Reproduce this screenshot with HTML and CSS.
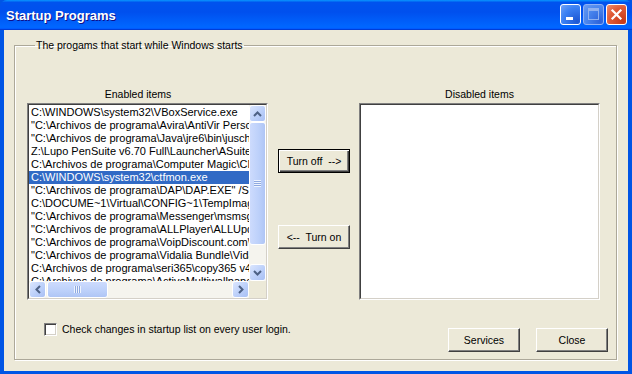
FILE: index.html
```html
<!DOCTYPE html>
<html lang="en">
<head>
    <meta charset="UTF-8">
    <meta name="viewport" content="width=device-width, initial-scale=1.0">
    <title>Startup Programs</title>
    <link rel="stylesheet" href="styles.css">
</head>
<body>
    <div class="window">
        <div class="titlebar">
            <span class="title">Startup Programs</span>
            <div class="title-buttons">
                <button class="tb tb-min"><span class="min-bar"></span></button>
                <button class="tb tb-max" disabled><span class="max-box"></span></button>
                <button class="tb tb-close">
                    <svg width="13" height="13" viewBox="0 0 13 13">
                        <path d="M2.5 2.5 L10.5 10.5 M10.5 2.5 L2.5 10.5" stroke="#fff" stroke-width="2.2" stroke-linecap="square"/>
                    </svg>
                </button>
            </div>
        </div>

        <div class="dialog">
            <fieldset class="group">
                <legend>The progams that start while Windows starts</legend>

                <div class="columns">
                    <div class="column">
                        <div class="caption caption-left">Enabled items</div>
                        <div class="listbox">
                            <div class="listbox-frame">
                                <ul class="items">
                                    <li>C:\WINDOWS\system32\VBoxService.exe</li>
                                    <li>"C:\Archivos de programa\Avira\AntiVir PersonalEdition Classic\avgnt.exe" /min</li>
                                    <li>"C:\Archivos de programa\Java\jre6\bin\jusched.exe"</li>
                                    <li>Z:\Lupo PenSuite v6.70 Full\Launcher\ASuite.exe</li>
                                    <li>C:\Archivos de programa\Computer Magic\CMI\cmi.exe</li>
                                    <li class="selected">C:\WINDOWS\system32\ctfmon.exe</li>
                                    <li>"C:\Archivos de programa\DAP\DAP.EXE" /STARTUP</li>
                                    <li>C:\DOCUME~1\Virtual\CONFIG~1\TempImageUploader.exe</li>
                                    <li>"C:\Archivos de programa\Messenger\msmsgs.exe" /background</li>
                                    <li>"C:\Archivos de programa\ALLPlayer\ALLUpdate.exe"</li>
                                    <li>"C:\Archivos de programa\VoipDiscount.com\VoipDiscount.exe"</li>
                                    <li>"C:\Archivos de programa\Vidalia Bundle\Vidalia\vidalia.exe"</li>
                                    <li>C:\Archivos de programa\seri365\copy365 v4\copy365.exe</li>
                                    <li>C:\Archivos de programa\ActiveMultiwallpaper\amw.exe</li>
                                </ul>

                                <div class="vscroll">
                                    <div class="sb-btn">
                                        <svg width="9" height="6" viewBox="0 0 9 6"><path d="M1 5 L4.5 1.5 L8 5" fill="none" stroke="#4d6185" stroke-width="2"/></svg>
                                    </div>
                                    <div class="thumb thumb-v"><span class="grip-v"></span></div>
                                    <div class="track"></div>
                                    <div class="sb-btn">
                                        <svg width="9" height="6" viewBox="0 0 9 6"><path d="M1 1 L4.5 4.5 L8 1" fill="none" stroke="#4d6185" stroke-width="2"/></svg>
                                    </div>
                                </div>

                                <div class="hscroll">
                                    <div class="sb-btn">
                                        <svg width="6" height="9" viewBox="0 0 6 9"><path d="M5 1 L1.5 4.5 L5 8" fill="none" stroke="#4d6185" stroke-width="2"/></svg>
                                    </div>
                                    <div class="thumb thumb-h"><span class="grip-h"></span></div>
                                    <div class="track"></div>
                                    <div class="sb-btn">
                                        <svg width="6" height="9" viewBox="0 0 6 9"><path d="M1 1 L4.5 4.5 L1 8" fill="none" stroke="#4d6185" stroke-width="2"/></svg>
                                    </div>
                                </div>

                                <div class="corner"></div>
                            </div>
                        </div>
                    </div>

                    <div class="actions">
                        <button class="btn btn-default">Turn off  --&gt;</button>
                        <button class="btn btn-on">&lt;--  Turn on</button>
                    </div>

                    <div class="column">
                        <div class="caption">Disabled items</div>
                        <div class="listbox">
                            <div class="listbox-frame empty"></div>
                        </div>
                    </div>
                </div>

                <div class="footer">
                    <label class="check">
                        <span class="checkbox"></span>
                        Check changes in startup list on every user login.
                    </label>
                    <div class="footer-buttons">
                        <button class="btn">Services</button>
                        <button class="btn">Close</button>
                    </div>
                </div>
            </fieldset>
        </div>
    </div>
</body>
</html>
```

FILE: styles.css
```css
body {
    margin: 0;
    font-family: "Liberation Sans", Arial, sans-serif;
    background: #ece9d8;
}

.window {
    width: 632px;
    height: 374px;
    display: flex;
    flex-direction: column;
    background: #0055e5;
    box-sizing: border-box;
}

/* title bar */
.titlebar {
    height: 30px;
    flex: none;
    display: flex;
    align-items: center;
    justify-content: space-between;
    padding: 0 5px 0 6px;
    background: linear-gradient(180deg, #0997ff, #0053ee 8%, #0050ee 40%, #0066ff 88%, #0066ff 93%, #005bff 95%, #003dd7 96%, #003dd7);
    border-radius: 7px 7px 0 0;
}

.title {
    color: #fff;
    font-weight: bold;
    font-size: 13px;
    text-shadow: 1px 1px #0f1089;
    margin-top: 1px;
}

.title-buttons {
    display: flex;
    gap: 2px;
    margin-top: -1px;
}

.tb {
    width: 21px;
    height: 21px;
    padding: 0;
    border: 1px solid #fff;
    border-radius: 3px;
    box-sizing: border-box;
    position: relative;
    display: flex;
    align-items: center;
    justify-content: center;
}

.tb-min {
    background: radial-gradient(circle at 85% 85%, #1d57d3 0%, #3a80f3 60%, #6fa3f8 100%);
}

.min-bar {
    position: absolute;
    left: 5px;
    bottom: 4px;
    width: 7px;
    height: 3px;
    background: #fff;
}

.tb-max {
    border-color: #8eb1f5;
    background: radial-gradient(circle at 85% 85%, #2c62da 0%, #4a86ee 60%, #6d9cf0 100%);
}

.max-box {
    width: 9px;
    height: 8px;
    border: 1px solid #8fb0ef;
    border-top-width: 3px;
    margin-top: -1px;
}

.tb-close {
    background: radial-gradient(circle at 85% 85%, #c83a18 0%, #e05b37 60%, #f0916f 100%);
}

/* dialog body */
.dialog {
    flex: 1;
    display: flex;
    flex-direction: column;
    margin: 0 4px 3px 4px;
    background: #ece9d8;
    font-size: 10.5px;
    color: #000;
}

.group {
    flex: 1;
    min-width: 0;
    margin: 9px 11px 11px 10px;
    padding: 36px 8px 0 12px;
    border: 1px solid #aca899;
    box-shadow: inset 1px 1px #fff, 1px 1px #fff;
    display: flex;
    flex-direction: column;
}

.group legend {
    margin-left: 8px;
    padding: 0 1px;
    line-height: 13px;
}

.columns {
    display: flex;
    margin-right: 8px;
}

.column {
    width: 241px;
    display: flex;
    flex-direction: column;
}

.caption {
    line-height: 13px;
    text-align: center;
    margin-bottom: 2px;
}

.caption-left {
    padding-right: 19px;
}

.listbox {
    height: 197px;
    box-sizing: border-box;
    border: 1px solid;
    border-color: #808080 #fff #fff #808080;
    background: #fff;
}

.listbox-frame {
    height: 100%;
    box-sizing: border-box;
    border: 1px solid;
    border-color: #404040 #d4d0c8 #d4d0c8 #404040;
    display: grid;
    grid-template-columns: 1fr 17px;
    grid-template-rows: 1fr 17px;
    overflow: hidden;
}

.listbox-frame.empty {
    display: block;
}

.items {
    list-style: none;
    margin: 0;
    padding: 1px 0 0 0;
    overflow: hidden;
    font-size: 11px;
    line-height: 13px;
}

.items li {
    white-space: nowrap;
    padding-left: 2px;
}

.items li.selected {
    background: #316ac5;
    color: #fff;
}

/* xp scrollbars */
.vscroll,
.hscroll {
    display: flex;
    background: #f5f4ee;
}

.vscroll {
    flex-direction: column;
    grid-row: 1;
    grid-column: 2;
}

.hscroll {
    grid-row: 2;
    grid-column: 1;
}

.track {
    flex: 1;
}

.sb-btn {
    width: 17px;
    height: 17px;
    flex: none;
    box-sizing: border-box;
    border: 1px solid #fff;
    border-radius: 3px;
    background: linear-gradient(135deg, #dbe6fe, #bcd0fa 55%, #a9c0f4);
    display: flex;
    align-items: center;
    justify-content: center;
}

.thumb {
    flex: none;
    box-sizing: border-box;
    border: 1px solid #fff;
    border-radius: 3px;
    display: flex;
    align-items: center;
    justify-content: center;
}

.thumb-v {
    height: 123px;
    background: linear-gradient(90deg, #cddbfd, #bcd0fa 60%, #afc5f5);
}

.thumb-h {
    width: 61px;
    margin-left: 1px;
    background: linear-gradient(180deg, #cddbfd, #bcd0fa 60%, #afc5f5);
}

.grip-v {
    width: 7px;
    height: 7px;
    background: repeating-linear-gradient(180deg, #eef4fe 0 1px, #8fa9e0 1px 2px);
}

.grip-h {
    width: 7px;
    height: 7px;
    background: repeating-linear-gradient(90deg, #eef4fe 0 1px, #8fa9e0 1px 2px);
}

.corner {
    grid-row: 2;
    grid-column: 2;
    background: #ece9d8;
}

/* buttons */
.actions {
    width: 72px;
    margin: 0 9px 0 10px;
    padding-top: 61px;
    display: flex;
    flex-direction: column;
    gap: 52px;
}

.btn {
    height: 24px;
    box-sizing: border-box;
    padding: 0;
    font-family: "Liberation Sans", Arial, sans-serif;
    font-size: 10.5px;
    color: #000;
    white-space: pre;
    background: #ece9d8;
    border: 1px solid;
    border-color: #fff #404040 #404040 #fff;
    box-shadow: inset -1px -1px #808080;
}

.btn-default {
    border: 1px solid #000;
    box-shadow: inset 1px 1px #fff, inset -1px -1px #404040, inset -2px -2px #808080;
}

.footer {
    display: flex;
    justify-content: space-between;
    margin-top: 23px;
}

.check {
    display: flex;
    align-items: center;
    gap: 5px;
    margin-left: 17px;
    height: 13px;
    line-height: 13px;
}

.checkbox {
    width: 13px;
    height: 13px;
    box-sizing: border-box;
    border: 1px solid;
    border-color: #808080 #fff #fff #808080;
    box-shadow: inset 1px 1px #404040, inset -1px -1px #d4d0c8;
    background: #fff;
}

.footer-buttons {
    display: flex;
    gap: 16px;
    margin-top: 5px;
}

.footer-buttons .btn {
    width: 72px;
}
```
